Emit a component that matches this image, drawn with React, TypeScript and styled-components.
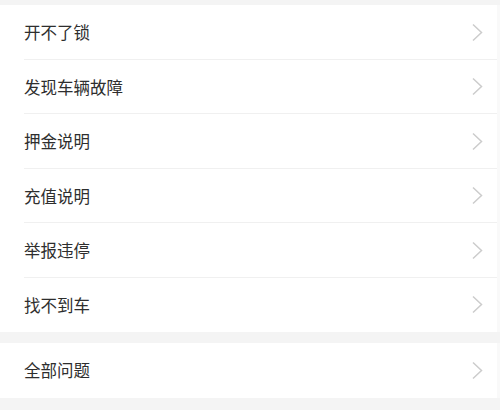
import React from "react";
import styled, { createGlobalStyle } from "styled-components";

const GlobalStyle = createGlobalStyle`
  html, body {
    margin: 0;
    padding: 0;
    background: #f4f4f4;
    font-family: "Noto Sans CJK SC", "Noto Sans", sans-serif;
  }
`;

const Page = styled.div`
  width: 500px;
  height: 410px;
  padding-top: 5px;
  box-sizing: border-box;
  background: #f4f4f4;
  display: flex;
  flex-direction: column;
  gap: 11px;
`;

const Group = styled.div`
  background: #fff;
  border-right: 3px solid #f9f9f9;
  display: flex;
  flex-direction: column;
`;

const Row = styled.div<{ $last?: boolean }>`
  position: relative;
  height: 54.5px;
  display: flex;
  align-items: center;
  justify-content: space-between;
  padding: 0 14px 0 24px;
  box-sizing: border-box;
  cursor: pointer;

  &::after {
    content: "";
    display: ${(p) => (p.$last ? "none" : "block")};
    position: absolute;
    left: 24px;
    right: 0;
    bottom: 0;
    height: 1px;
    background: #f0f0f0;
  }
`;

const Label = styled.span`
  font-size: 16.5px;
  color: #2e2e2e;
`;

const Chevron = () => (
  <svg width="12" height="19" viewBox="0 0 12 19" fill="none">
    <path d="M2 1.5 L10.5 9.5 L2 17.5" stroke="#cccccc" strokeWidth="1.5" />
  </svg>
);

const mainItems = ["开不了锁", "发现车辆故障", "押金说明", "充值说明", "举报违停", "找不到车"];

export default function App() {
  return (
    <>
      <GlobalStyle />
      <Page>
        <Group>
          {mainItems.map((item, i) => (
            <Row key={item} $last={i === mainItems.length - 1}>
              <Label>{item}</Label>
              <Chevron />
            </Row>
          ))}
        </Group>
        <Group>
          <Row $last>
            <Label>全部问题</Label>
            <Chevron />
          </Row>
        </Group>
      </Page>
    </>
  );
}
